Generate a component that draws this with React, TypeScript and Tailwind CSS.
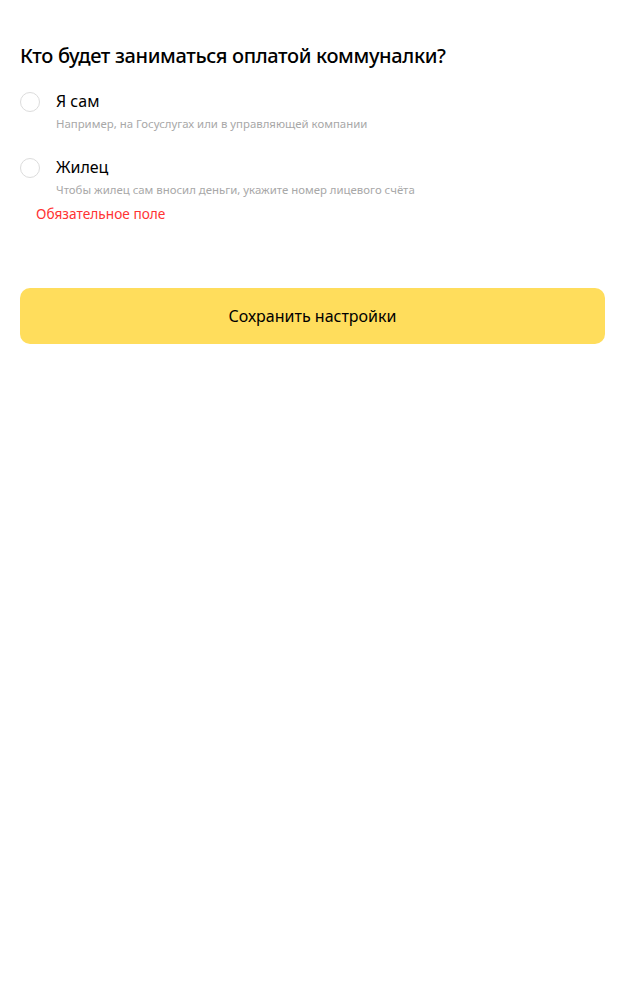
export default function App() {
  const options = [
    { label: 'Я сам', hint: 'Например, на Госуслугах или в управляющей компании' },
    { label: 'Жилец', hint: 'Чтобы жилец сам вносил деньги, укажите номер лицевого счёта' },
  ];

  return (
    <div className="min-h-screen bg-white px-5 pt-[42px] text-black" style={{ fontFamily: '"Noto Sans", "Open Sans", sans-serif' }}>
      <h1 className="text-[20px] leading-[28px] font-medium tracking-[-0.35px]">Кто будет заниматься оплатой коммуналки?</h1>

      <div className="mt-[21px] flex flex-col gap-[25px]">
        {options.map((o) => (
          <label key={o.label} className="flex items-start gap-4 cursor-pointer">
            <span className="mt-px h-5 w-5 shrink-0 rounded-full border border-[#dcdcdc] bg-white" />
            <span className="flex flex-col">
              <span className="text-[16px] leading-[20px]">{o.label}</span>
              <span className="mt-[5px] text-[11.4px] leading-[16px] text-[#a8a8a8]">{o.hint}</span>
            </span>
          </label>
        ))}
      </div>

      <div className="mt-[7px] pl-4 text-[13.7px] leading-[18px] text-[#ff3333]">Обязательное поле</div>

      <button className="mt-[65px] h-[56px] w-full rounded-[10px] bg-[#ffdd5c] text-[16px] text-black">
        Сохранить настройки
      </button>
    </div>
  );
}
